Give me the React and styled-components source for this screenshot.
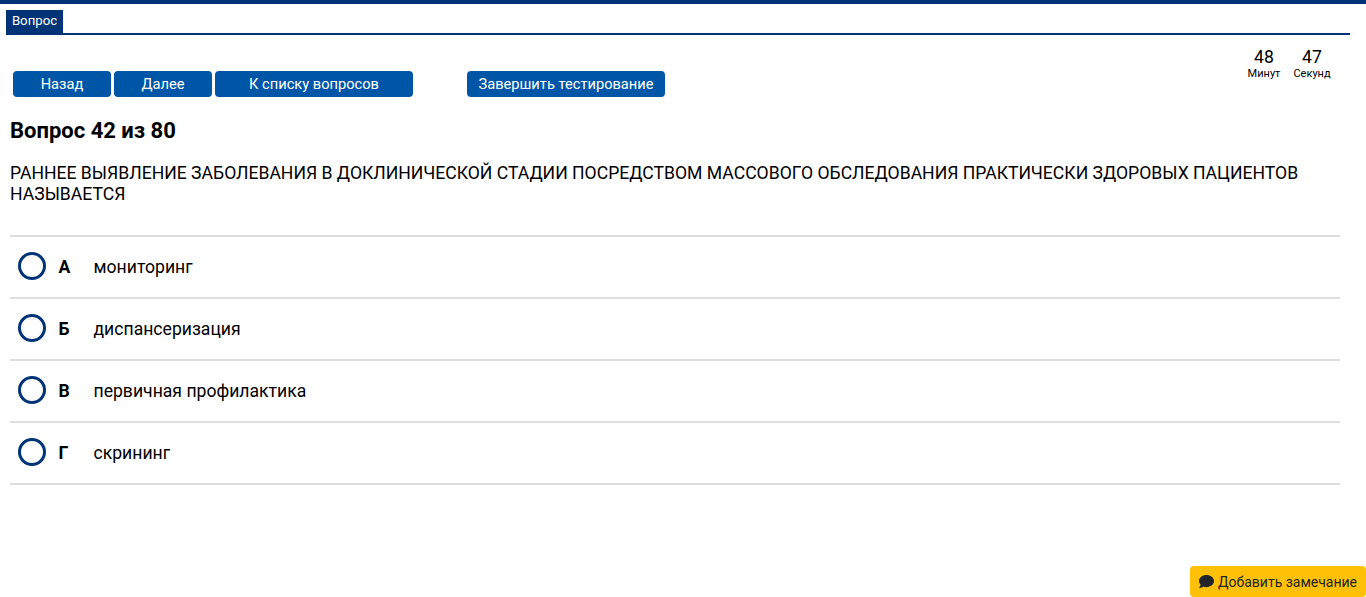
import React from 'react';
import styled, { createGlobalStyle } from 'styled-components';

const Global = createGlobalStyle`
  html, body { margin: 0; padding: 0; background: #fff; }
  body { font-family: Roboto, "Liberation Sans", sans-serif; color: #000; overflow: hidden; }
`;
const Page = styled.div`
  border-top: 4px solid #003476;
  min-height: 593px;
  box-sizing: border-box;
  padding-top: 6px;
`;
const Tabs = styled.div`
  display: flex;
  margin: 0 16px 0 6px;
  border-bottom: 2px solid #003476;
  height: 23px;
`;
const Tab = styled.div`
  width: 57px;
  background: #003476;
  color: #fff;
  font-size: 13.2px;
  line-height: 22px;
  text-align: center;
`;
const Toolbar = styled.div`
  display: flex;
  justify-content: space-between;
  align-items: flex-start;
  height: 62px;
  padding: 0 16px 0 13px;
`;
const Buttons = styled.div`
  display: flex;
  gap: 3px;
  margin-top: 36px;
`;
const Button = styled.button`
  width: ${p => p.$w}px;
  height: 26px;
  margin-left: ${p => p.$gap || 0}px;
  padding: 0;
  border: 0;
  border-radius: 4px;
  background: #0056a6;
  color: #fff;
  font: 400 14.67px/27px Roboto, sans-serif;
`;
const Timer = styled.div`
  display: flex;
  margin: 13px 14px 0 0;
`;
const TimerCell = styled.div`
  width: 48px;
  text-align: center;
`;
const TimerValue = styled.div`
  font-size: 17.6px;
  line-height: 19px;
`;
const TimerLabel = styled.div`
  font-size: 11px;
  line-height: 13px;
`;
const Content = styled.div`
  margin: 0 26px 0 10px;
`;
const Heading = styled.h1`
  margin: 0;
  padding-top: 22px;
  font-size: 22px;
  font-weight: 700;
  line-height: 24px;
`;
const Question = styled.p`
  margin: 20px 0 30px;
  font-size: 17.6px;
  line-height: 21px;
`;
const Option = styled.div`
  display: flex;
  align-items: center;
  height: 60px;
  padding-left: 8px;
  border-top: 2px solid #dedede;
  &:last-child { border-bottom: 2px solid #dedede; }
`;
const Radio = styled.span`
  width: 28px;
  height: 28px;
  margin-bottom: 2px;
  box-sizing: border-box;
  border: 3px solid #003476;
  border-radius: 50%;
  flex: none;
`;
const Letter = styled.b`
  width: 35px;
  margin-left: 12.5px;
  font-size: 17.6px;
  font-weight: 700;
`;
const Answer = styled.span`
  font-size: 17.6px;
`;
const Remark = styled.button`
  position: fixed;
  right: 0;
  bottom: 0;
  width: 176px;
  height: 31px;
  display: flex;
  align-items: center;
  justify-content: center;
  gap: 3px;
  padding: 0 1px 0 0;
  border: 0;
  border-radius: 4px;
  background: #ffc107;
  color: #212529;
  font: 400 14px/20px Roboto, sans-serif;
`;

const options = [
  ['А', 'мониторинг'],
  ['Б', 'диспансеризация'],
  ['В', 'первичная профилактика'],
  ['Г', 'скрининг'],
];

export default function App() {
  return (
    <Page>
      <Global />
      <Tabs><Tab>Вопрос</Tab></Tabs>
      <Toolbar>
        <Buttons>
          <Button $w={98}>Назад</Button>
          <Button $w={98}>Далее</Button>
          <Button $w={198}>К списку вопросов</Button>
          <Button $w={198} $gap={51}>Завершить тестирование</Button>
        </Buttons>
        <Timer>
          <TimerCell><TimerValue>48</TimerValue><TimerLabel>Минут</TimerLabel></TimerCell>
          <TimerCell><TimerValue>47</TimerValue><TimerLabel>Секунд</TimerLabel></TimerCell>
        </Timer>
      </Toolbar>
      <Content>
        <Heading>Вопрос 42 из 80</Heading>
        <Question>РАННЕЕ ВЫЯВЛЕНИЕ ЗАБОЛЕВАНИЯ В ДОКЛИНИЧЕСКОЙ СТАДИИ ПОСРЕДСТВОМ МАССОВОГО ОБСЛЕДОВАНИЯ ПРАКТИЧЕСКИ ЗДОРОВЫХ ПАЦИЕНТОВ НАЗЫВАЕТСЯ</Question>
        <div>
          {options.map(([l, t]) => (
            <Option key={l}><Radio /><Letter>{l}</Letter><Answer>{t}</Answer></Option>
          ))}
        </div>
      </Content>
      <Remark>
        <svg width="17" height="15" viewBox="0 0 512 512" fill="#212529" aria-hidden="true">
          <path d="M256 32C114.600 32 0 125.100 0 240c0 49.600 21.400 95 57 130.700C44.500 421.100 2.700 466 2.200 466.500c-2.200 2.300-2.800 5.700-1.500 8.700S4.800 480 8 480c66.300 0 116-31.800 140.600-51.400 32.700 12.300 69 19.400 107.400 19.400 141.400 0 256-93.100 256-208S397.400 32 256 32z" />
        </svg>
        Добавить замечание
      </Remark>
    </Page>
  );
}
